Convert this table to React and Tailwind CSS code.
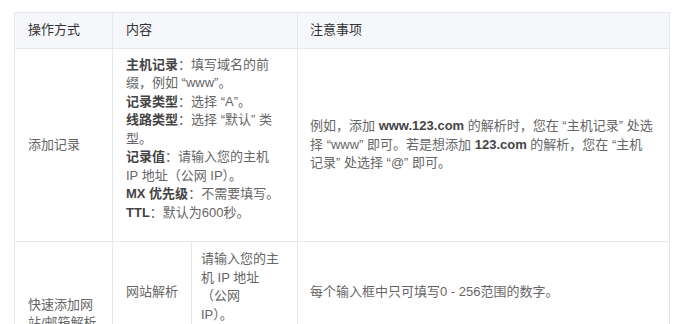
import React from 'react';

const font = { fontFamily: '"Liberation Sans", "Noto Sans CJK SC", sans-serif' };

const B = ({ children }) => <b className="font-bold text-[#444]">{children}</b>;

const recordItems = [
  { label: '主机记录', text: '：填写域名的前缀，例如 “www”。' },
  { label: '记录类型', text: '：选择 “A”。' },
  { label: '线路类型', text: '：选择 “默认” 类型。' },
  { label: '记录值', text: '：请输入您的主机 IP 地址（公网 IP）。' },
  { label: 'MX 优先级', text: '：不需要填写。' },
  { label: 'TTL', text: '：默认为600秒。' },
];

const App = () => {
  return (
    <div className="w-[683px] h-[324px] overflow-hidden bg-white pt-[12px] pl-[14px]" style={font}>
      <table className="table-fixed border-collapse w-[655px] text-[13px] leading-[18.5px] text-[#666]">
        <colgroup>
          <col className="w-[98px]" />
          <col className="w-[79px]" />
          <col className="w-[106px]" />
          <col className="w-[372px]" />
        </colgroup>
        <thead>
          <tr className="bg-[#f5f7fa] text-[#333]">
            <th className="border border-[#e5e7eb] px-[13px] py-[8px] text-left font-normal">操作方式</th>
            <th colSpan={2} className="border border-[#e5e7eb] px-[13px] py-[8px] text-left font-normal">内容</th>
            <th className="border border-[#e5e7eb] px-[12px] py-[8px] text-left font-normal">注意事项</th>
          </tr>
        </thead>
        <tbody>
          <tr>
            <td className="border border-[#e5e7eb] px-[13px] py-[13px] align-middle">添加记录</td>
            <td colSpan={2} className="border border-[#e5e7eb] pl-[13px] pr-[17px] pt-[7px] pb-[19px] align-top">
              {recordItems.map((item) => (
                <div key={item.label}>
                  <B>{item.label}</B>
                  {item.text}
                </div>
              ))}
            </td>
            <td className="border border-[#e5e7eb] pl-[12px] pr-[16px] py-[13px] align-middle">
              例如，添加 <B>www.123.com</B> 的解析时，您在 “主机记录” 处选择 “www” 即可。若是想添加 <B>123.com</B> 的解析，您在 “主机记录” 处选择 “@” 即可。
            </td>
          </tr>
          <tr>
            <td rowSpan={2} className="border border-[#e5e7eb] px-[13px] py-[13px] align-middle">快速添加网站/邮箱解析</td>
            <td className="border border-[#e5e7eb] px-[13px] py-[13px] align-middle">网站解析</td>
            <td className="border border-[#e5e7eb] pl-[9px] pr-[16px] pt-[8px] pb-[18px] align-top">
              请输入您的主机 IP 地址（公网<br />IP）。
            </td>
            <td className="border border-[#e5e7eb] px-[12px] py-[13px] align-middle">每个输入框中只可填写0 - 256范围的数字。</td>
          </tr>
          <tr>
            <td className="border border-[#e5e7eb] px-[13px] py-[3px] align-middle">邮箱解析</td>
            <td className="border border-[#e5e7eb] pl-[9px] pr-[16px] py-[3px] align-middle">请选择邮箱服务商。</td>
            <td className="border border-[#e5e7eb] px-[12px] py-[3px] align-middle">系统将自动添加对应的 MX 记录。</td>
          </tr>
        </tbody>
      </table>
    </div>
  );
};

export default App;
